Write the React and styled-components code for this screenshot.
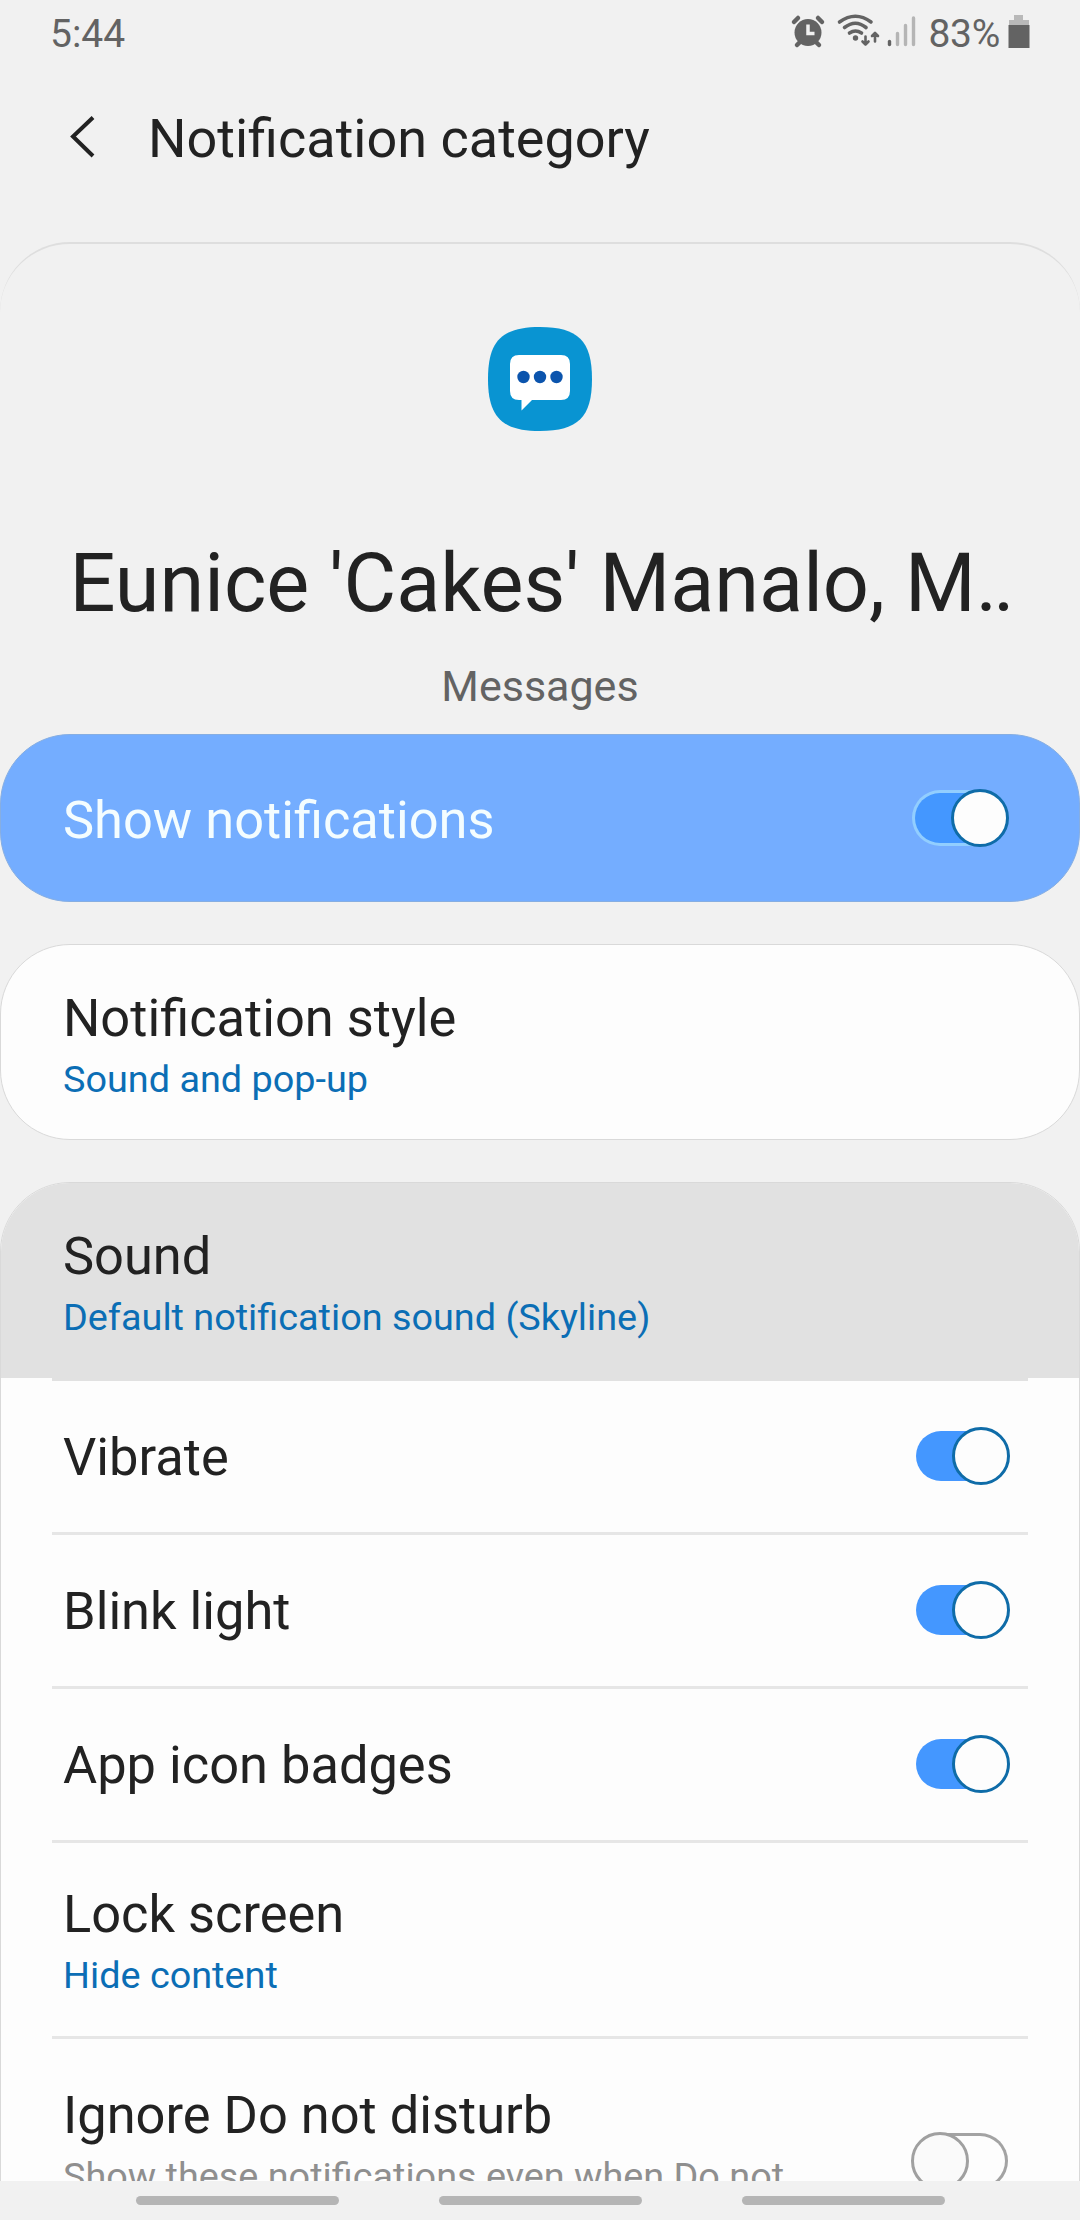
import React from "react";
import styled, { createGlobalStyle, css } from "styled-components";

const GlobalStyle = createGlobalStyle`
  * {
    box-sizing: border-box;
  }
  body {
    margin: 0;
    background: #f1f1f1;
    color: #222222;
    font-family: Roboto, "Liberation Sans", sans-serif;
  }
`;

const Screen = styled.div`
  width: 1080px;
  height: 2220px;
  display: flex;
  flex-direction: column;
  overflow: hidden;
`;

const StatusBar = styled.div`
  flex-shrink: 0;
  height: 66px;
  padding: 0 50px;
  display: flex;
  justify-content: space-between;
  align-items: center;
  color: #636363;
  font-size: 39px;
  line-height: 64px;
`;

const StatusText = styled.span`
  padding-top: 2px;
  letter-spacing: ${(props) => props.$spacing || "0"};
`;

const StatusIcons = styled.div`
  display: flex;
  align-items: center;

  svg {
    display: block;
  }

  ${StatusText} {
    margin: 0 8px 0 3px;
  }
`;

const Header = styled.header`
  flex-shrink: 0;
  height: 176px;
  padding: 38px 0 0 67px;
  display: flex;
  align-items: flex-start;
`;

const BackButton = styled.button`
  border: 0;
  padding: 10px 0 0;
  width: 81px;
  background: none;
  cursor: pointer;

  svg {
    display: block;
  }
`;

const HeaderTitle = styled.h1`
  margin: 0;
  font-size: 54px;
  font-weight: 400;
  line-height: 70px;
`;

const Content = styled.main`
  flex: 1;
  min-height: 0;
  overflow: hidden;
`;

const Summary = styled.section`
  height: 492px;
  padding-top: 83px;
  display: flex;
  flex-direction: column;
  align-items: center;
  border-top: 2px solid #dedede;
  border-radius: 70px 70px 0 0;
`;

const SummaryTitle = styled.h2`
  margin: 105px 0 0;
  font-size: 81px;
  font-weight: 400;
  line-height: 96px;
  white-space: nowrap;
`;

const Dots = styled.span`
  letter-spacing: -4px;
`;

const SummaryApp = styled.p`
  margin: 29px 0 0;
  color: #636363;
  font-size: 43px;
  line-height: 50px;
`;

const Card = styled.section`
  overflow: hidden;
  border: 1px solid #d9d9d9;
  border-radius: ${(props) => (props.$open ? "70px 70px 0 0" : "70px")};
  background: #fdfdfd;
  margin-bottom: 42px;
`;

const Label = styled.span`
  font-size: 52.4px;
  line-height: 61px;
`;

const Banner = styled.section`
  height: 168px;
  padding: 0 70px 0 62px;
  margin-bottom: 42px;
  display: flex;
  align-items: center;
  justify-content: space-between;
  border: 1px solid #86aee2;
  border-radius: 70px;
  background: #74adff;
  color: #f4fdff;

  > ${Label} {
    padding-top: 4px;
  }
`;

const Row = styled.div`
  height: ${(props) => props.$height}px;
  padding: 0 69px 2px 62px;
  display: flex;
  align-items: center;
  justify-content: space-between;
  background: ${(props) => (props.$pressed ? "#e1e1e1" : "none")};

  > ${Label} {
    padding-top: 4px;
  }
`;

const Divider = styled.hr`
  margin: 0 51px;
  height: 3px;
  border: 0;
  background: ${(props) => (props.$pressed ? "#e1e1e1" : "#e6e6e6")};
`;

const Labels = styled.div`
  display: flex;
  flex-direction: column;
  align-self: flex-start;
  padding-top: ${(props) => props.$top || 43}px;
`;

const Detail = styled.span`
  margin-top: 6px;
  color: ${(props) => (props.$muted ? "#8f8f8f" : "#0b6eb5")};
  font-size: 37.8px;
  line-height: 48px;
  white-space: nowrap;
`;

const Track = styled.span`
  flex-shrink: 0;
  width: 96px;
  height: 58px;
  padding: 4px 2px;
  display: flex;
  align-items: center;
`;

const Groove = styled.span`
  width: 90px;
  height: 50px;
  display: flex;
  align-items: center;
  border-radius: 27px;
  background: #4497ff;
  ${(props) =>
    props.$outlined &&
    css`
      box-shadow: 0 0 0 3px #92ceff;
    `}
  ${(props) =>
    props.$off &&
    css`
      width: 89px;
      background: #fdfdfd;
      box-shadow: 0 0 0 3px #a3a3a3;
    `}
`;

const Thumb = styled.span`
  flex-shrink: 0;
  width: 58px;
  height: 58px;
  margin-left: ${(props) => (props.$off ? -5 : 36)}px;
  border: 3px solid ${(props) => (props.$off ? "#a0a0a0" : "#0f6ca8")};
  border-radius: 50%;
  background: ${(props) => (props.$off ? "#fafafa" : "#fdfdfd")};
`;

const NavBar = styled.nav`
  flex-shrink: 0;
  height: 39px;
  padding-top: 15px;
  display: flex;
  justify-content: center;
  gap: 100px;
  background: #f1f1f1;
`;

const NavHandle = styled.span`
  width: 203px;
  height: 9px;
  border-radius: 5px;
  background: #b5b5b5;
`;

const Switch = ({ off, outlined }) => (
  <Track>
    <Groove $off={off} $outlined={outlined}>
      <Thumb $off={off} />
    </Groove>
  </Track>
);

const SystemIcons = () => (
  <svg width="140" height="66" viewBox="784 0 140 66" fill="none">
    <g stroke="#636363" strokeWidth="4.5" strokeLinecap="round">
      <path d="M793 22l4-4M821 22l-4-4M799 42l-3 3M815 42l3 3" />
    </g>
    <circle cx="807" cy="32.500" r="13.500" fill="#636363" />
    <path d="M807 24.500v9h6.500" stroke="#f1f1f1" strokeWidth="3.500" />
    <g stroke="#636363" strokeWidth="3.600" strokeLinecap="round">
      <path d="M838.500 22Q854.500 10.500 870 22" />
      <path d="M843.500 27.500Q854.500 19 865 27.500" />
      <path d="M848.500 33Q854.500 29 860.500 33" />
    </g>
    <circle cx="854.500" cy="38" r="2.700" fill="#636363" />
    <g stroke="#636363" strokeWidth="2.600" strokeLinecap="round" strokeLinejoin="round">
      <path d="M864.500 36.500v8M861.500 41.500l3 3 3-3" />
      <path d="M874 41.500v-8M871 36l3-3 3 3" />
    </g>
    <g strokeWidth="3.400" strokeLinecap="round">
      <path d="M888.500 41.500v3" stroke="#636363" />
      <path d="M896.500 33.500v11M904.500 25.500v19M912.500 18v26.500" stroke="#b5b5b5" />
    </g>
  </svg>
);

const Battery = () => (
  <svg width="22" height="66" viewBox="0 0 22 66">
    <path d="M6 15h9v5h6v6H1v-6h5z" fill="#b9b9b9" />
    <path d="M0.500 25h21v23h-21z" fill="#636363" />
  </svg>
);

const MessagesIcon = () => (
  <svg width="104" height="104" viewBox="0 0 104 104">
    <path
      d="M52 0C90 0 104 14 104 52S90 104 52 104 0 90 0 52 14 0 52 0z"
      fill="#0994d2"
    />
    <path
      d="M31 28h42q9 0 9 9v27q0 9-9 9H44L33.500 83.500V73H31q-9 0-9-9V37q0-9 9-9z"
      fill="#fff"
    />
    <g fill="#0b54ad">
      <circle cx="35.500" cy="50" r="6.200" />
      <circle cx="52" cy="50" r="6.200" />
      <circle cx="68.500" cy="50" r="6.200" />
    </g>
  </svg>
);

const toggles = ["Vibrate", "Blink light", "App icon badges"];

export default () => (
  <Screen>
    <GlobalStyle />
    <StatusBar>
      <StatusText>5:44</StatusText>
      <StatusIcons>
        <SystemIcons />
        <StatusText $spacing="-0.3px">83%</StatusText>
        <Battery />
      </StatusIcons>
    </StatusBar>

    <Header>
      <BackButton aria-label="Back">
        <svg width="30" height="46" viewBox="0 0 30 46" fill="none">
          <path d="M26 3.500L6 22.500L26 42" stroke="#222" strokeWidth="4" />
        </svg>
      </BackButton>
      <HeaderTitle>Notification category</HeaderTitle>
    </Header>

    <Content>
      <Summary>
        <MessagesIcon />
        <SummaryTitle>
          Eunice 'Cakes' Manalo, M<Dots>..</Dots>
        </SummaryTitle>
        <SummaryApp>Messages</SummaryApp>
      </Summary>

      <Banner>
        <Label>Show notifications</Label>
        <Switch outlined />
      </Banner>

      <Card>
        <Row $height={194}>
          <Labels>
            <Label>Notification style</Label>
            <Detail>Sound and pop-up</Detail>
          </Labels>
        </Row>
      </Card>

      <Card $open>
        <Row $height={195} $pressed>
          <Labels>
            <Label>Sound</Label>
            <Detail>Default notification sound (Skyline)</Detail>
          </Labels>
        </Row>
        <Divider $pressed />
        {toggles.map((name) => (
          <React.Fragment key={name}>
            <Row $height={151}>
              <Label>{name}</Label>
              <Switch />
            </Row>
            <Divider />
          </React.Fragment>
        ))}
        <Row $height={193}>
          <Labels $top={41}>
            <Label>Lock screen</Label>
            <Detail>Hide content</Detail>
          </Labels>
        </Row>
        <Divider />
        <Row $height={246}>
          <Labels $top={46}>
            <Label>Ignore Do not disturb</Label>
            <Detail $muted>Show these notifications even when Do not</Detail>
          </Labels>
          <Switch off />
        </Row>
      </Card>
    </Content>

    <NavBar>
      <NavHandle />
      <NavHandle />
      <NavHandle />
    </NavBar>
  </Screen>
);
